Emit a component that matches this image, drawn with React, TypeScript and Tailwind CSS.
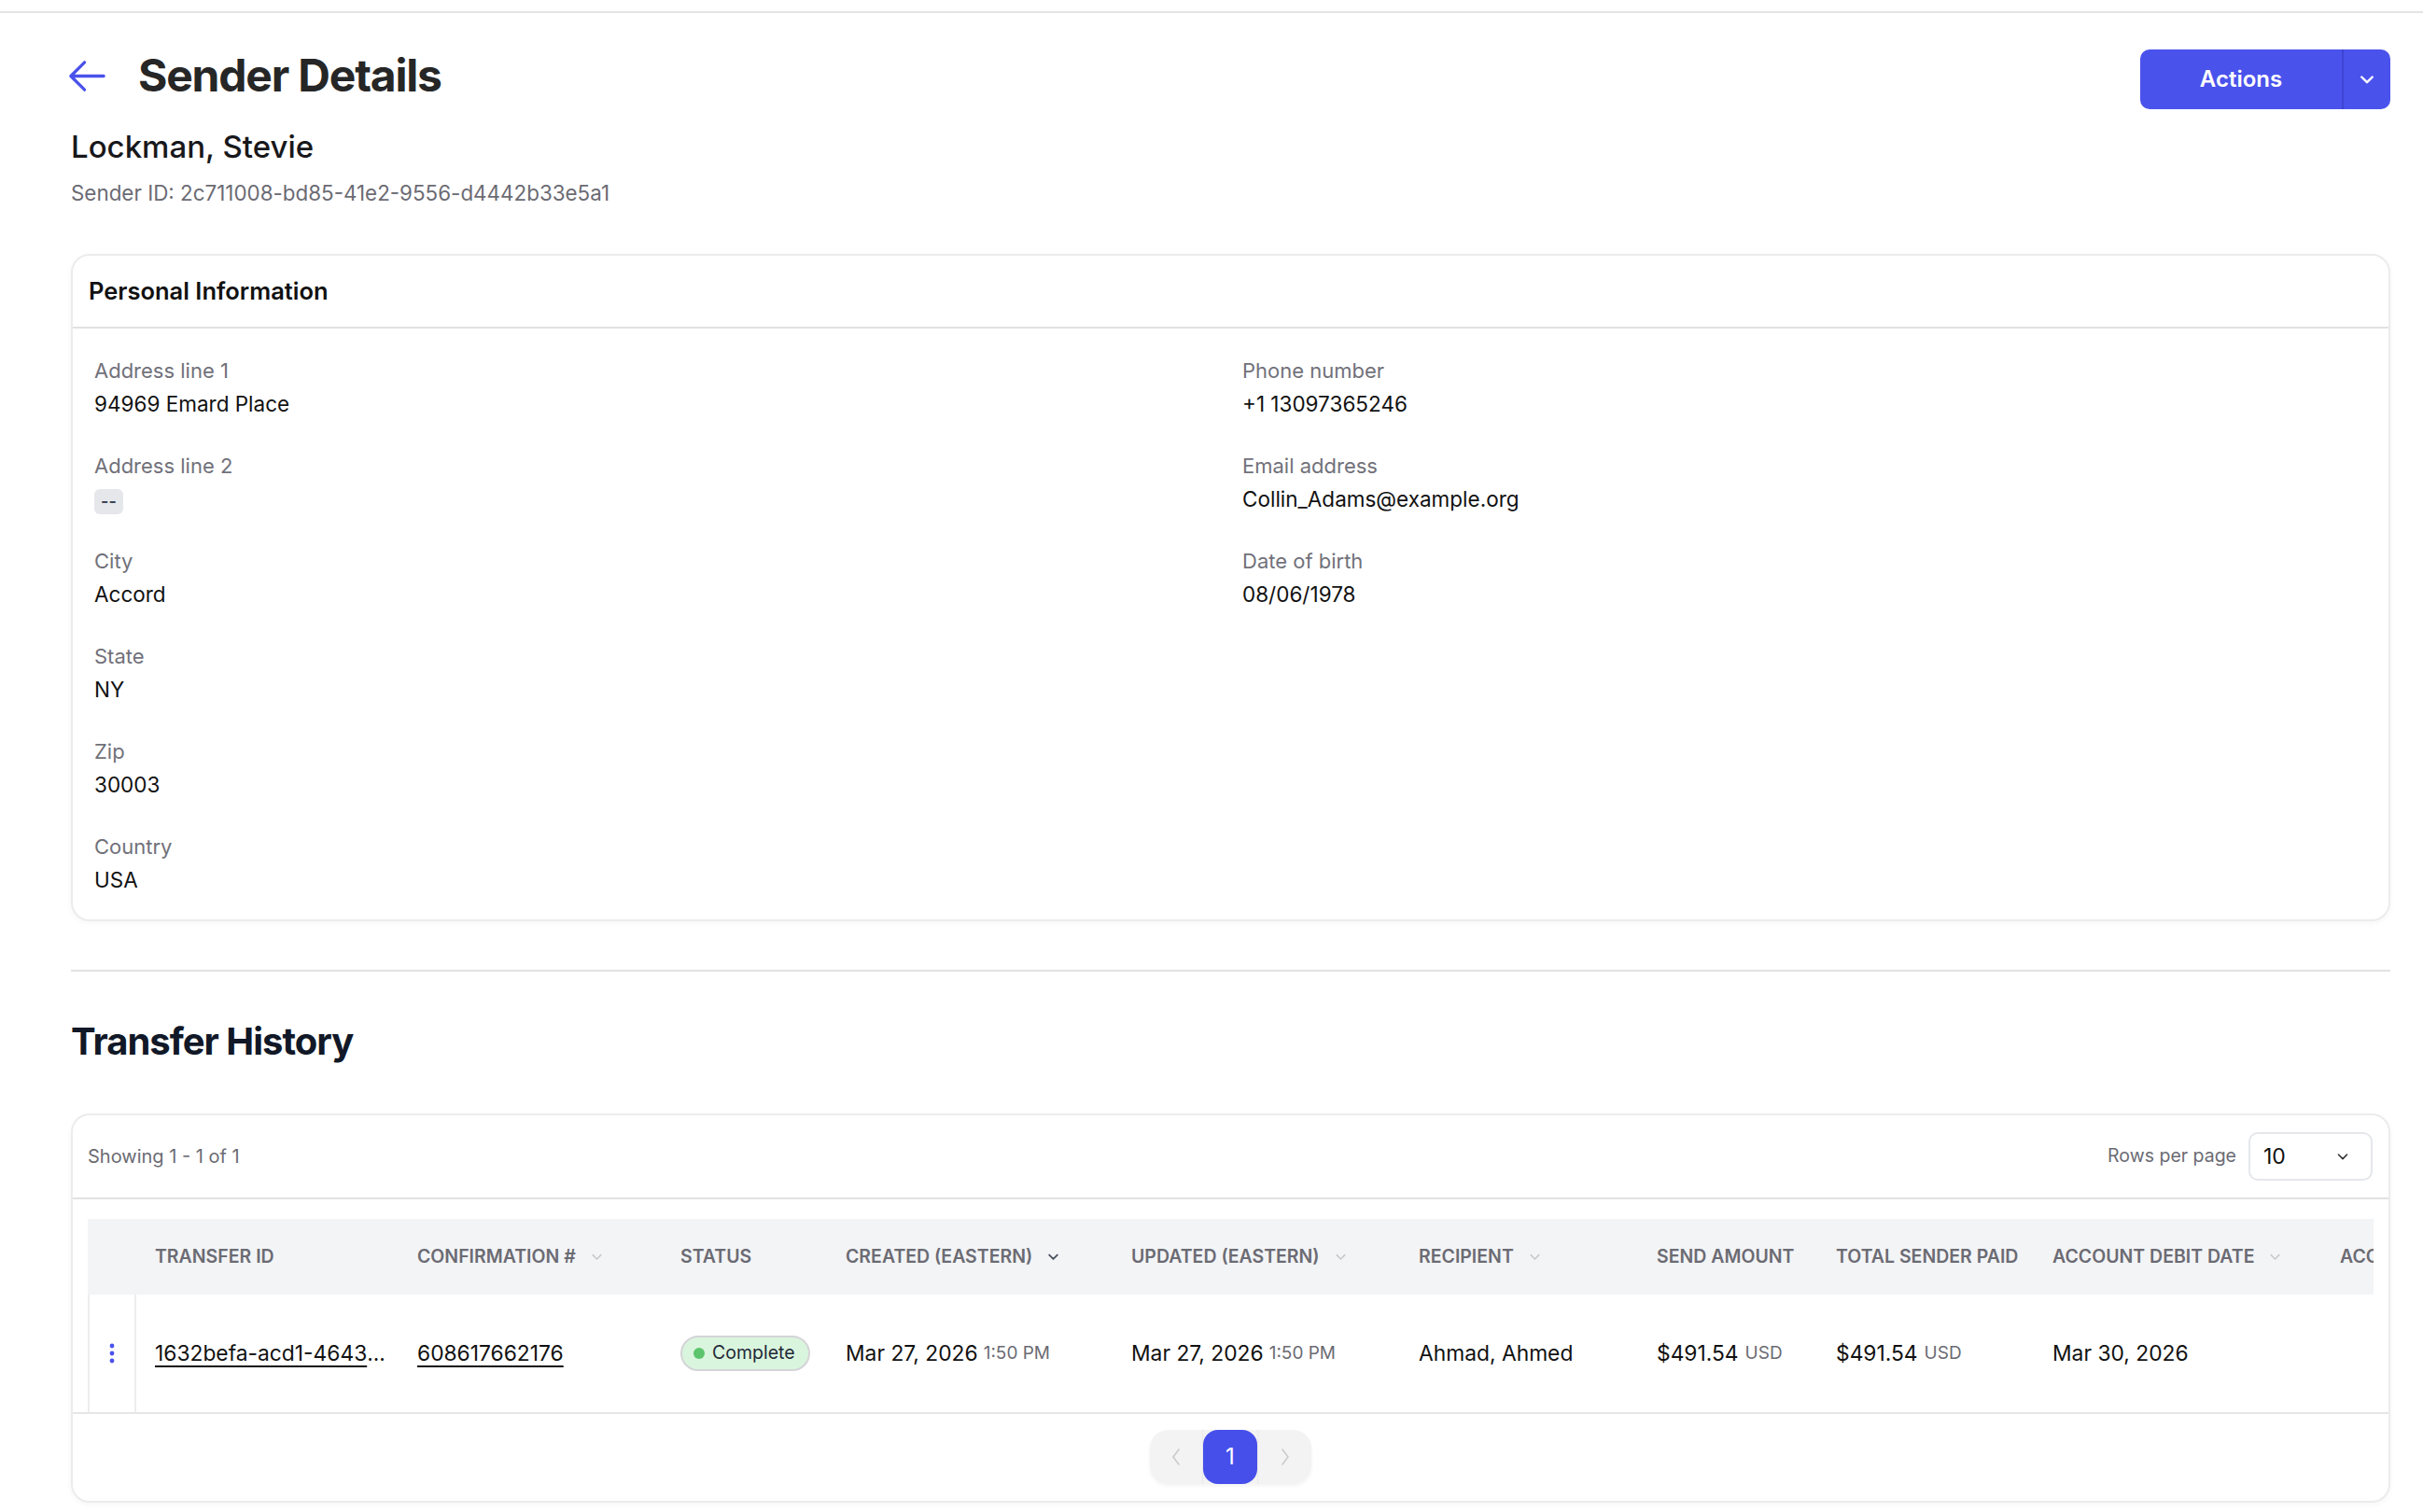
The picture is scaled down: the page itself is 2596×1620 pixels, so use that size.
import React from "react";

function Chevron({ className = "", color = "currentColor", w = 14, sw = 1.6 }: { className?: string; color?: string; w?: number; sw?: number }) {
  return (
    <svg width={w} height={w} viewBox="0 0 14 14" fill="none" className={className}>
      <path d="M3 5.25 7 9.25 11 5.25" stroke={color} strokeWidth={sw} strokeLinecap="round" strokeLinejoin="round" />
    </svg>
  );
}

function Field({ label, children }: { label: string; children: React.ReactNode }) {
  return (
    <div className="flex flex-col">
      <div className="text-[22px] leading-[36px] text-[#71717a]">{label}</div>
      <div className="text-[22.5px] leading-[36px] text-[#111111]">{children}</div>
    </div>
  );
}

const cols = "grid grid-cols-[52px_281px_282px_177px_306px_308px_255px_192px_232px_308px_200px]";

function HeadCell({ children, sort, active }: { children: React.ReactNode; sort?: boolean; active?: boolean }) {
  return (
    <div className="flex items-center pl-[20px] text-[19.5px] font-semibold uppercase text-[#6b6b73] whitespace-nowrap">
      <span>{children}</span>
      {sort && (
        <Chevron className="ml-[15px]" color={active ? "#4b5563" : "#c7c7cc"} w={15} sw={active ? 1.8 : 1.4} />
      )}
    </div>
  );
}

function Cell({ children, className = "" }: { children: React.ReactNode; className?: string }) {
  return <div className={`flex items-center pl-[20px] whitespace-nowrap text-[22.8px] text-[#111111] ${className}`}>{children}</div>;
}

export default function App() {
  return (
    <div className="min-h-screen bg-white font-[Inter,sans-serif] text-[#111111]">
      <div className="h-[14px] border-b-2 border-[#e4e4e4]" />
      <div className="pl-[76px] pr-[35px]">
        {/* Header row */}
        <div className="mt-[39px] flex h-[64px] items-center justify-between">
          <div className="-mt-[8px] flex items-center gap-[37px]">
            <svg width="47" height="47" viewBox="0 0 24 24" fill="none" className="-ml-[6px]">
              <path d="M10.5 19.5 3 12m0 0 7.5-7.5M3 12h18" stroke="#4a52ec" strokeWidth="1.7" strokeLinecap="round" strokeLinejoin="round" />
            </svg>
            <h1 className="-ml-[6px] text-[48px] font-bold leading-[64px] tracking-tight text-[#262626]">Sender Details</h1>
          </div>
          <div className="flex h-[64px] overflow-hidden rounded-[10px] bg-[#4a52ec] text-white">
            <div className="flex w-[216px] items-center justify-center text-[24px] font-semibold">Actions</div>
            <div className="w-[2px] bg-[#3d45d2]" />
            <div className="flex w-[50px] items-center justify-center">
              <Chevron color="#ffffff" w={20} sw={1.7} />
            </div>
          </div>
        </div>

        <div className="mt-[20px] text-[33px] font-medium leading-[40px] text-[#18181b]">Lockman, Stevie</div>
        <div className="mt-[14px] text-[22.4px] leading-[32px] text-[#6b6b73]">Sender ID: 2c711008-bd85-41e2-9556-d4442b33e5a1</div>

        {/* Personal information card */}
        <div className="mt-[49px] rounded-[20px] border-2 border-[#ececec] bg-white shadow-[0_2px_6px_rgba(0,0,0,0.04)]">
          <div className="flex h-[78px] items-center border-b-2 border-[#e2e2e2] pl-[17px]">
            <h2 className="text-[25.5px] font-semibold text-[#111111]">Personal Information</h2>
          </div>
          <div className="grid grid-cols-[1230px_1fr] pl-[23px] pt-[27px] pb-[24px]">
            <div className="flex flex-col gap-[30px]">
              <Field label="Address line 1">94969 Emard Place</Field>
              <Field label="Address line 2">
                <span className="inline-flex h-[27px] items-center rounded-[6px] bg-[#e5e7eb] px-[7px] text-[18px] font-semibold leading-none text-[#374151]">--</span>
              </Field>
              <Field label="City">Accord</Field>
              <Field label="State">NY</Field>
              <Field label="Zip">30003</Field>
              <Field label="Country">USA</Field>
            </div>
            <div className="flex flex-col gap-[30px]">
              <Field label="Phone number">+1 13097365246</Field>
              <Field label="Email address">Collin_Adams@example.org</Field>
              <Field label="Date of birth">08/06/1978</Field>
            </div>
          </div>
        </div>

        <div className="mt-[52px] h-[2px] bg-[#e2e2e2]" />

        <h2 className="mt-[49px] text-[40px] font-bold leading-[52px] tracking-tight text-[#111827]">Transfer History</h2>

        {/* Table card */}
        <div className="mt-[51px] rounded-[20px] border-2 border-[#ececec] bg-white shadow-[0_2px_6px_rgba(0,0,0,0.04)]">
          <div className="flex h-[90px] items-center justify-between border-b-2 border-[#e2e2e2] pl-[16px] pr-[17px]">
            <div className="text-[20px] text-[#6b6b73]">Showing 1 - 1 of 1</div>
            <div className="flex items-center gap-[13px]">
              <span className="text-[19.5px] text-[#6b6b73]">Rows per page</span>
              <div className="flex h-[52px] w-[133px] items-center justify-between rounded-[10px] border-2 border-[#e5e7eb] pl-[14px] pr-[22px]">
                <span className="text-[23px] text-[#111111]">10</span>
                <Chevron color="#333333" w={16} sw={1.4} />
              </div>
            </div>
          </div>

          <div className="border-b-2 border-[#e6e6e6] px-[16px] pt-[21px]">
            <div className="overflow-hidden">
              <div className={`${cols} h-[81px] bg-[#f3f4f6]`}>
                <div />
                <HeadCell>Transfer ID</HeadCell>
                <HeadCell sort>Confirmation #</HeadCell>
                <HeadCell>Status</HeadCell>
                <HeadCell sort active>Created (Eastern)</HeadCell>
                <HeadCell sort>Updated (Eastern)</HeadCell>
                <HeadCell sort>Recipient</HeadCell>
                <HeadCell>Send Amount</HeadCell>
                <HeadCell>Total Sender Paid</HeadCell>
                <HeadCell sort>Account Debit Date</HeadCell>
                <HeadCell>Account</HeadCell>
              </div>
              <div className={`${cols} h-[126px]`}>
                <div className="flex items-center justify-center border-x-2 border-[#ededed]">
                  <svg width="8" height="24" viewBox="0 0 8 24">
                    <circle cx="4" cy="4" r="2.4" fill="#4a52ec" />
                    <circle cx="4" cy="12" r="2.4" fill="#4a52ec" />
                    <circle cx="4" cy="20" r="2.4" fill="#4a52ec" />
                  </svg>
                </div>
                <Cell>
                  <span className="underline decoration-2 underline-offset-[5px]">1632befa-acd1-4643</span>
                  <span>...</span>
                </Cell>
                <Cell>
                  <span className="underline decoration-2 underline-offset-[5px]">608617662176</span>
                </Cell>
                <Cell>
                  <span className="inline-flex h-[38px] items-center gap-[8px] rounded-full border-2 border-[#d4d4d8] bg-[#daf5de] pl-[12px] pr-[14px] text-[19.5px] text-[#1f2937]">
                    <span className="h-[12px] w-[12px] rounded-full bg-[#5cc46c]" />
                    Complete
                  </span>
                </Cell>
                <Cell>
                  Mar 27, 2026<span className="ml-[6px] text-[19px] text-[#6b6b73]">1:50 PM</span>
                </Cell>
                <Cell>
                  Mar 27, 2026<span className="ml-[6px] text-[19px] text-[#6b6b73]">1:50 PM</span>
                </Cell>
                <Cell>Ahmad, Ahmed</Cell>
                <Cell>
                  $491.54<span className="ml-[7px] text-[19px] text-[#6b6b73]">USD</span>
                </Cell>
                <Cell>
                  $491.54<span className="ml-[7px] text-[19px] text-[#6b6b73]">USD</span>
                </Cell>
                <Cell>Mar 30, 2026</Cell>
                <Cell>{""}</Cell>
              </div>
            </div>
          </div>

          <div className="flex justify-center pt-[17px] pb-[18px]">
            <div className="flex h-[58px] items-stretch rounded-[20px] bg-[#f3f3f3] shadow-[0_2px_4px_rgba(0,0,0,0.05)]">
              <div className="flex w-[57px] items-center justify-center border-r border-[#e9e9e9]">
                <svg width="14" height="22" viewBox="0 0 14 22" fill="none">
                  <path d="M10 3 4 11l6 8" stroke="#cbcbcb" strokeWidth="1.6" strokeLinecap="round" strokeLinejoin="round" />
                </svg>
              </div>
              <div className="flex w-[58px] items-center justify-center rounded-[16px] bg-[#474feb] text-[24px] text-white">1</div>
              <div className="flex w-[58px] items-center justify-center border-l border-[#e9e9e9]">
                <svg width="14" height="22" viewBox="0 0 14 22" fill="none">
                  <path d="M4 3l6 8-6 8" stroke="#cbcbcb" strokeWidth="1.6" strokeLinecap="round" strokeLinejoin="round" />
                </svg>
              </div>
            </div>
          </div>
        </div>
      </div>
    </div>
  );
}
